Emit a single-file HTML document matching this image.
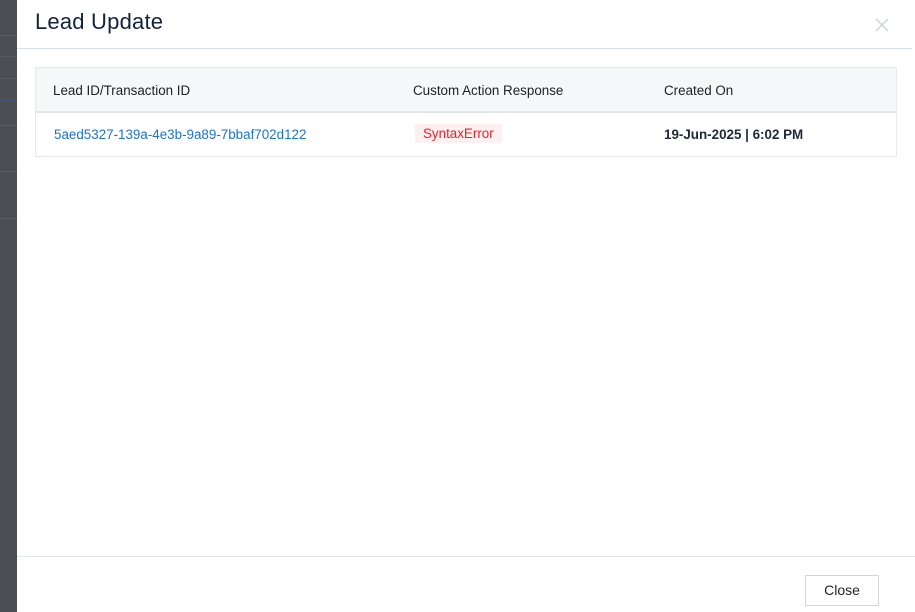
<!DOCTYPE html>
<html><head><style>
body{margin:0;width:915px;height:612px;overflow:hidden;background:#fff;font-family:"Liberation Sans",sans-serif;position:relative}
.strip{position:absolute;left:0;top:0;width:17px;height:612px;background:#4c4e53}
.strip div{position:absolute;left:0;width:17px;height:1px;background:#57595e}
.modal{position:absolute;left:17px;top:0;width:898px;height:612px;background:#fff}
.title{position:absolute;left:18px;top:9px;font-size:22px;color:#14233c;letter-spacing:0.2px}
.hl{position:absolute;left:0;top:48px;width:895px;height:1px;background:#d3e0ea}
.x{position:absolute;left:857px;top:17px}
.tbl{position:absolute;left:18px;top:67px;width:860px;height:88px;border:1px solid #e6e9ee}
.th{position:absolute;left:0;top:0;width:860px;height:43px;background:#f6f7f9;border-bottom:2px solid #e2e5ea}
.c{position:absolute;font-size:13.4px;color:#222}
.ft{position:absolute;left:0;top:556px;width:898px;height:1px;background:#e3e6ea}
.btn{position:absolute;left:788px;top:575px;width:72px;height:29px;border:1px solid #d2d6dc;font-size:14px;color:#222;text-align:center;line-height:29px}
</style></head><body>
<div class="strip"><div style="top:35px"></div><div style="top:56px"></div><div style="top:78px"></div><div style="top:100px;background:#3f5a78"></div><div style="top:125px"></div><div style="top:171px"></div><div style="top:218px"></div></div>
<div class="modal">
<div class="title">Lead Update</div>
<svg class="x" width="16" height="16" viewBox="0 0 16 16"><path d="M2 2L14 14M14 2L2 14" stroke="#d3d8e0" stroke-width="1.6"/></svg>
<div class="hl"></div>
<div class="tbl">
<div class="th"></div>
<div class="c" style="left:17px;top:15px">Lead ID/Transaction ID</div>
<div class="c" style="left:377px;top:15px">Custom Action Response</div>
<div class="c" style="left:628px;top:15px">Created On</div>
<div class="c" style="left:18px;top:59px;color:#1a73d0">5aed5327-139a-4e3b-9a89-7bbaf702d122</div>
<div class="c" style="left:379px;top:56px;color:#ee1c24;background:#fdf0f0;padding:2px 8px">SyntaxError</div>
<div class="c" style="left:628px;top:59px;font-weight:bold;color:#1e2a3a">19-Jun-2025 | 6:02 PM</div>
</div>
<div class="ft"></div>
<div class="btn">Close</div>
</div>
</body></html>
